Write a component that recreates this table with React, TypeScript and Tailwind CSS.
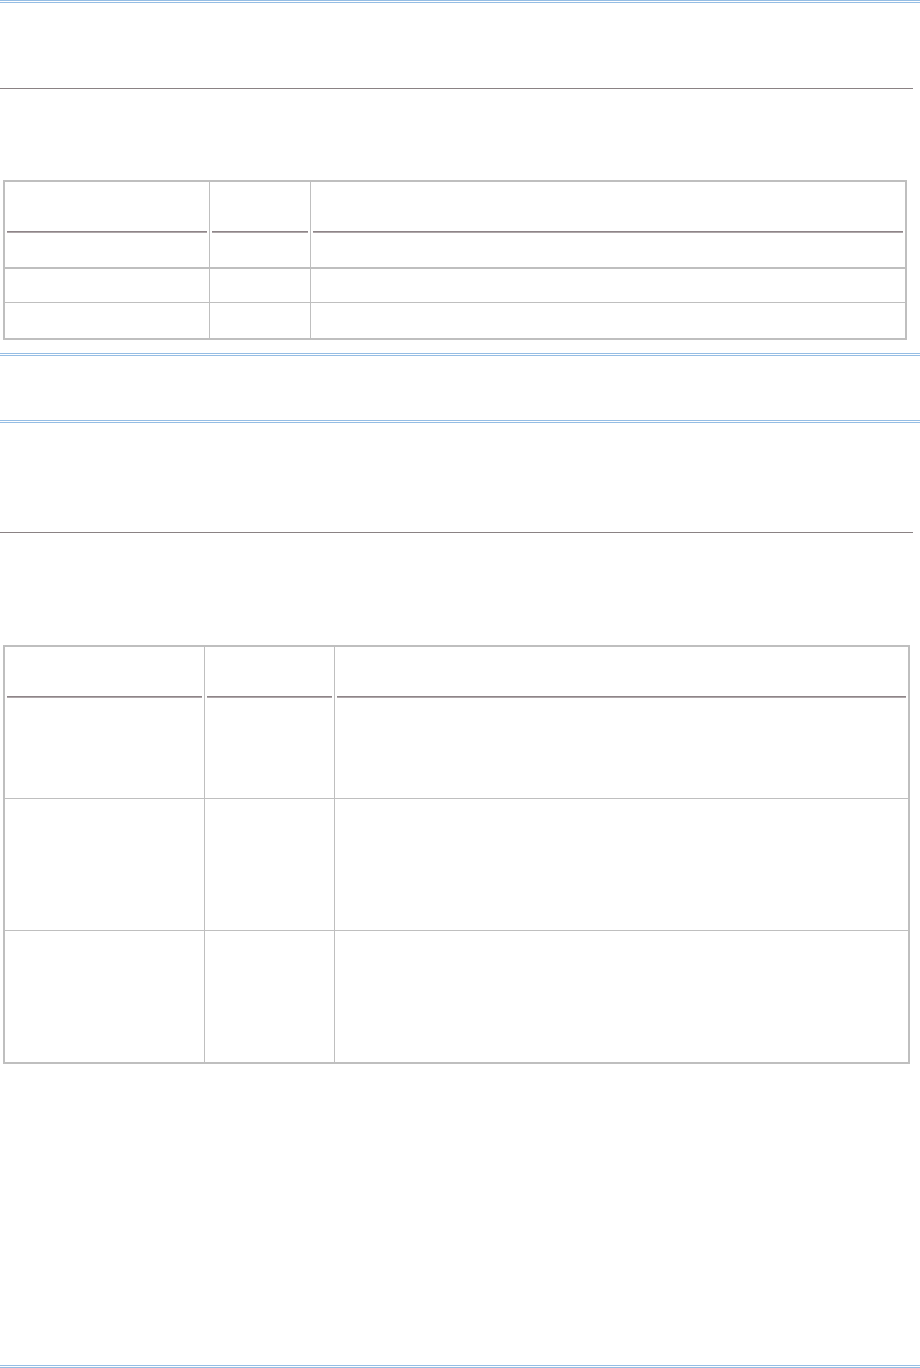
import React from 'react';

type Grid = {
  cols: string;
  headerH: string;
  rows: { h: string; line: string }[];
  width: string;
};

const BlueRule = () => (
  <div className="w-full h-[3px] border-t border-b border-[#95bde4]" />
);

const GreyRule = () => <div className="w-[913px] h-px bg-[#8a8284]" />;

const EmptyTable: React.FC<{ grid: Grid }> = ({ grid }) => {
  const cells = [0, 1, 2];
  return (
    <div className={`ml-[3px] ${grid.width} border-2 border-[#bfbfbf] bg-white`}>
      {/* header row with underlined cells */}
      <div className={`grid ${grid.cols} ${grid.headerH}`}>
        {cells.map((c) => (
          <div
            key={c}
            className={`flex flex-col justify-end px-[2px] ${c < 2 ? 'border-r border-[#bfbfbf]' : ''}`}
          >
            <div className="h-[2px] bg-[#8e8588] border-b border-[#aea7a9]" />
          </div>
        ))}
      </div>
      {grid.rows.map((r, i) => (
        <div key={i} className={`grid ${grid.cols} ${r.h} ${r.line}`}>
          {cells.map((c) => (
            <div key={c} className={c < 2 ? 'border-r border-[#bfbfbf]' : ''} />
          ))}
        </div>
      ))}
    </div>
  );
};

const firstTable: Grid = {
  width: 'w-[904px]',
  cols: 'grid-cols-[205px_101px_1fr]',
  headerH: 'h-[51px]',
  rows: [
    { h: 'h-[36px]', line: 'border-b-2 border-[#bfbfbf]' },
    { h: 'h-[34px]', line: 'border-b border-[#bfbfbf]' },
    { h: 'h-[35px]', line: '' },
  ],
};

const secondTable: Grid = {
  width: 'w-[907px]',
  cols: 'grid-cols-[200px_130px_1fr]',
  headerH: 'h-[51px]',
  rows: [
    { h: 'h-[101px]', line: 'border-b border-[#bfbfbf]' },
    { h: 'h-[132px]', line: 'border-b border-[#bfbfbf]' },
    { h: 'h-[131px]', line: '' },
  ],
};

export default function App() {
  return (
    <div className="w-[920px] h-[1368px] bg-white flex flex-col font-['Liberation_Sans',Arial,sans-serif]">
      <BlueRule />
      <div className="h-[85px]" />
      <GreyRule />
      <div className="h-[91px]" />
      <EmptyTable grid={firstTable} />
      <div className="h-[13px]" />
      <BlueRule />
      <div className="h-[64px]" />
      <BlueRule />
      <div className="h-[109px]" />
      <GreyRule />
      <div className="h-[112px]" />
      <EmptyTable grid={secondTable} />
      <div className="flex-1" />
      <BlueRule />
    </div>
  );
}
